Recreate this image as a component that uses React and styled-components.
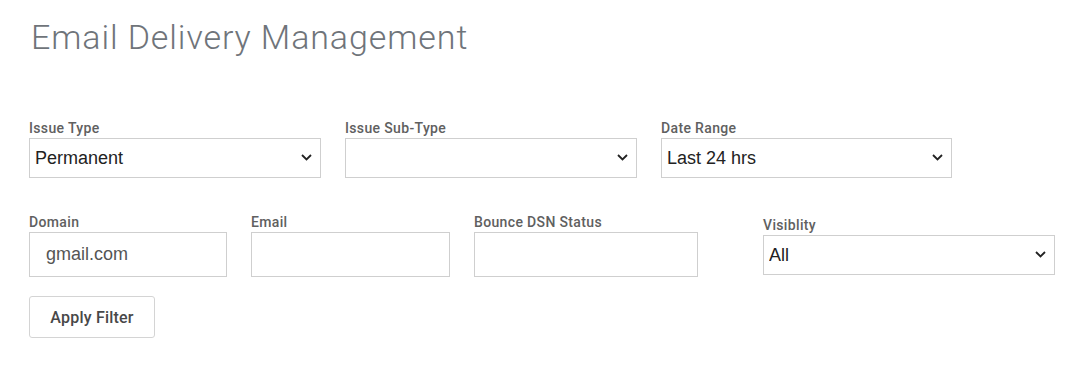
import React from "react";
import styled, { createGlobalStyle } from "styled-components";

const GlobalStyle = createGlobalStyle`
  body {
    margin: 0;
    background: #fff;
    font-family: Roboto, "Liberation Sans", sans-serif;
  }
`;

const Page = styled.div`
  padding: 17px 0 0 29px;
`;

const Title = styled.h1`
  margin: 0 0 63px;
  font-size: 34px;
  line-height: 40px;
  font-weight: 300;
  color: #6f747a;
  letter-spacing: 0.9px;
  padding-left: 2px;
`;

const Row = styled.div`
  display: flex;
  align-items: center;
  gap: 24px;
  margin-bottom: ${props => props.spacing || 0}px;
`;

const Field = styled.div`
  display: flex;
  flex-direction: column;
  width: ${props => props.width}px;
  margin-left: ${props => props.offset || 0}px;
`;

const Label = styled.label`
  font-size: 14px;
  line-height: 16px;
  font-weight: 500;
  color: #606060;
  letter-spacing: 0.35px;
  margin-bottom: 2px;
`;

const SelectWrap = styled.div`
  position: relative;
  height: 40px;
`;

const Select = styled.select`
  appearance: none;
  width: 100%;
  height: 40px;
  box-sizing: border-box;
  border: 1px solid #cfcfcf;
  border-radius: 0;
  background: #fff;
  padding: 0 30px 0 5px;
  font-family: "Liberation Sans", Arial, sans-serif;
  font-size: 18px;
  color: #222;
  outline: none;
`;

const Chevron = styled.svg`
  position: absolute;
  right: 9px;
  top: 16px;
  width: 11px;
  height: 7px;
  pointer-events: none;
`;

const Input = styled.input`
  width: 100%;
  height: 45px;
  box-sizing: border-box;
  border: 1px solid #cfcfcf;
  padding: 0 16px;
  font-family: "Liberation Sans", Arial, sans-serif;
  font-size: 18px;
  color: #555;
  outline: none;
`;

const Button = styled.button`
  width: 126px;
  height: 42px;
  border: 1px solid #d4d4d4;
  border-radius: 3px;
  background: #fff;
  font-family: Roboto, "Liberation Sans", sans-serif;
  font-size: 16px;
  font-weight: 500;
  letter-spacing: 0.2px;
  color: #484848;
  cursor: pointer;
`;

const SelectField = ({ label, width, value, options, offset }) => (
  <Field width={width} offset={offset}>
    <Label>{label}</Label>
    <SelectWrap>
      <Select defaultValue={value}>
        {options.map(o => (
          <option key={o} value={o}>
            {o}
          </option>
        ))}
      </Select>
      <Chevron viewBox="0 0 11 7">
        <path d="M1 1 L5.5 5.5 L10 1" fill="none" stroke="#222" strokeWidth="1.8" />
      </Chevron>
    </SelectWrap>
  </Field>
);

const InputField = ({ label, width, value }) => (
  <Field width={width}>
    <Label>{label}</Label>
    <Input defaultValue={value} />
  </Field>
);

const App = () => (
  <>
    <GlobalStyle />
    <Page>
      <Title>Email Delivery Management</Title>
      <Row spacing={36}>
        <SelectField label="Issue Type" width={292} value="Permanent" options={["Permanent", "Transient", "Undetermined"]} />
        <SelectField label="Issue Sub-Type" width={292} value="" options={["", "General", "NoEmail", "Suppressed"]} />
        <SelectField label="Date Range" width={291} value="Last 24 hrs" options={["Last 24 hrs", "Last 7 days", "Last 30 days"]} />
      </Row>
      <Row spacing={19}>
        <InputField label="Domain" width={198} value="gmail.com" />
        <InputField label="Email" width={199} value="" />
        <InputField label="Bounce DSN Status" width={224} value="" />
        <SelectField label="Visiblity" width={292} value="All" offset={41} options={["All", "Visible", "Hidden"]} />
      </Row>
      <Button>Apply Filter</Button>
    </Page>
  </>
);

export default App;
